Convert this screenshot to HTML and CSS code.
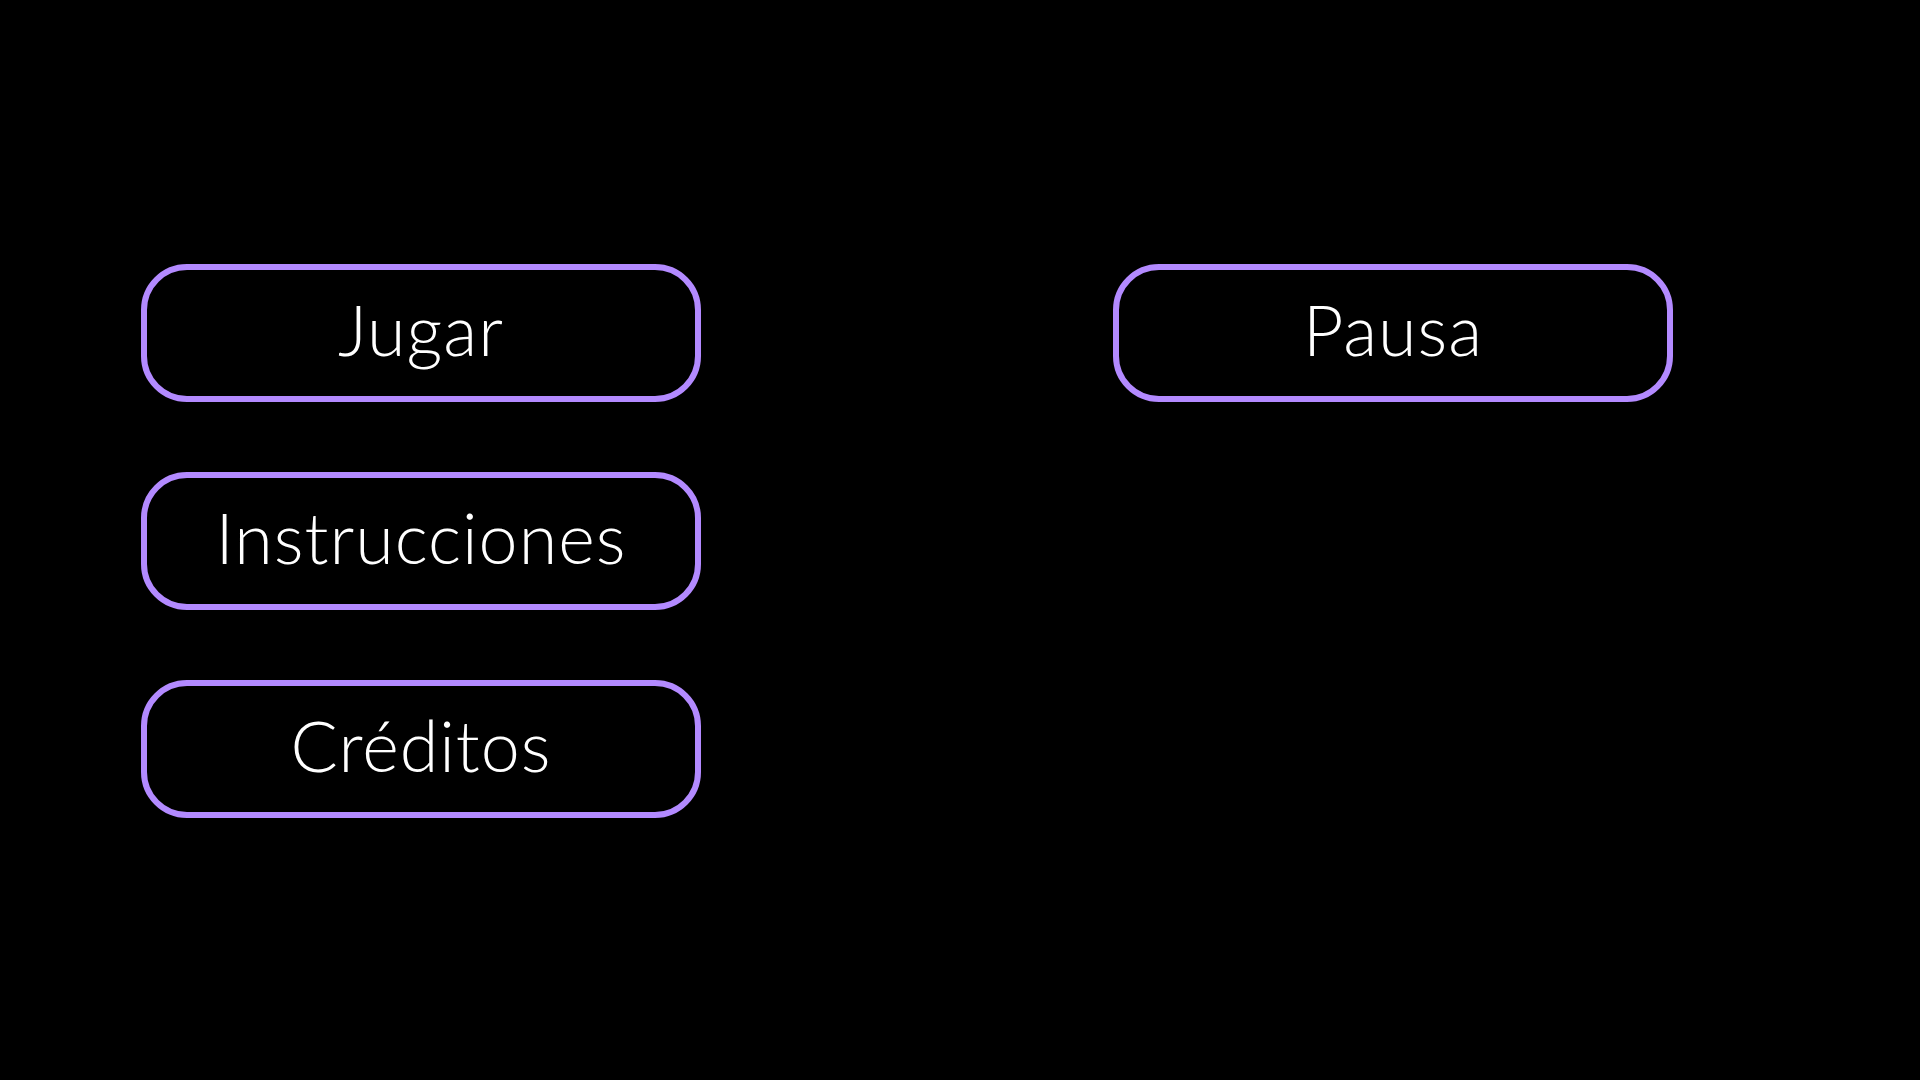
FILE: index.html
```html
<!DOCTYPE html>
<html lang="es">
<head>
<meta charset="utf-8">
<title>Menú</title>
<link rel="stylesheet" href="styles.css">
</head>
<body>
<main class="screen">
  <section class="menu">
    <button class="btn">Jugar</button>
    <button class="btn">Instrucciones</button>
    <button class="btn">Créditos</button>
  </section>
  <section class="menu">
    <button class="btn">Pausa</button>
  </section>
</main>
</body>
</html>
```

FILE: styles.css
```css
html, body {
  margin: 0;
  padding: 0;
  background: #000;
  width: 1920px;
  height: 1080px;
  overflow: hidden;
}
.screen {
  display: flex;
  gap: 412px;
  padding: 264px 0 0 141px;
  box-sizing: border-box;
  height: 1080px;
}
.menu {
  display: flex;
  flex-direction: column;
  gap: 70px;
}
.btn {
  width: 560px;
  height: 138px;
  box-sizing: border-box;
  background: #000;
  border: 6px solid #b38aff;
  border-radius: 46px;
  color: #fff;
  font-family: "Lato", "Noto Sans", sans-serif;
  font-weight: 300;
  font-size: 70px;
  letter-spacing: 1px;
  padding: 0 0 8px 0;
  display: flex;
  align-items: center;
  justify-content: center;
}
```
